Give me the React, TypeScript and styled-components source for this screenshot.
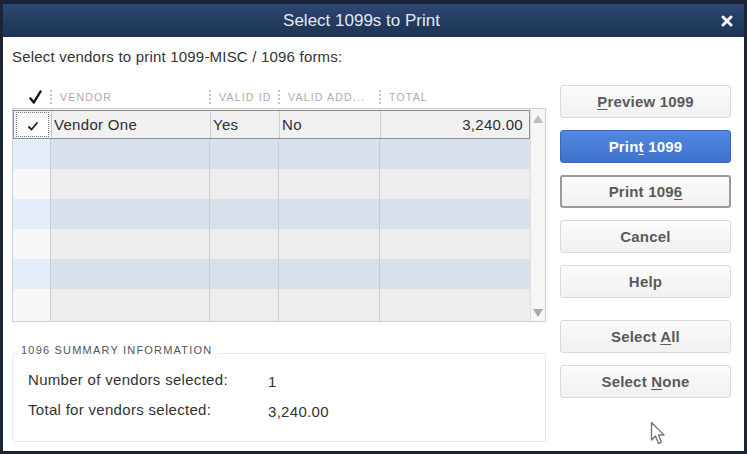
import styled, { createGlobalStyle } from 'styled-components';

const GlobalStyle = createGlobalStyle`
  html, body {
    margin: 0;
    padding: 0;
    background: #1b2536;
  }
  * {
    box-sizing: border-box;
  }
`;

type Vendor = { name: string; validId: string; validAddress: string; total: string };

const vendors: Vendor[] = [
  { name: 'Vendor One', validId: 'Yes', validAddress: 'No', total: '3,240.00' },
];

const EMPTY_ROWS = 6;

const App = () => {
  return (
    <Window>
      <GlobalStyle />
      <TitleBar>
        <Title>Select 1099s to Print</Title>
        <CloseButton aria-label="Close">
          <svg width="12" height="12" viewBox="0 0 12 12">
            <path d="M2 2 L10 10 M10 2 L2 10" stroke="#f2f4f8" strokeWidth="3" strokeLinecap="round" />
          </svg>
        </CloseButton>
      </TitleBar>

      <Body>
        <MainColumn>
          <Intro>Select vendors to print 1099-MISC / 1096 forms:</Intro>

          <HeaderRow>
            <HeaderCell>
              <svg width="13" height="14" viewBox="0 0 13 14">
                <path d="M1.5 8.5 L4.8 12.5 L11.5 1.5" stroke="#111" strokeWidth="2.4" fill="none" strokeLinecap="round" strokeLinejoin="round" />
              </svg>
            </HeaderCell>
            <HeaderCell $divider>Vendor</HeaderCell>
            <HeaderCell $divider>Valid ID</HeaderCell>
            <HeaderCell $divider>Valid Add...</HeaderCell>
            <HeaderCell $divider>Total</HeaderCell>
          </HeaderRow>

          <Table>
            <Rows>
              {vendors.map((v) => (
                <DataRow key={v.name}>
                  <CheckCell>
                    <CheckBox>
                      <svg width="10" height="9" viewBox="0 0 10 9">
                        <path d="M1 5 L3.5 7.5 L9 1" stroke="#222" strokeWidth="1.8" fill="none" strokeLinecap="round" strokeLinejoin="round" />
                      </svg>
                    </CheckBox>
                  </CheckCell>
                  <Cell>{v.name}</Cell>
                  <Cell>{v.validId}</Cell>
                  <Cell>{v.validAddress}</Cell>
                  <Cell $right $last>{v.total}</Cell>
                </DataRow>
              ))}
              {Array.from({ length: EMPTY_ROWS }).map((_, i) => (
                <EmptyRow key={i} $blue={i % 2 === 0}>
                  <FirstCell $blue={i % 2 === 0} />
                  <Cell />
                  <Cell />
                  <Cell />
                  <Cell $last />
                </EmptyRow>
              ))}
            </Rows>
            <Scrollbar>
              <ScrollArrow $up />
              <ScrollArrow />
            </Scrollbar>
          </Table>

          <Summary>
            <SummaryLegend>1096 Summary Information</SummaryLegend>
            <SummaryLine>
              <SummaryLabel>Number of vendors selected:</SummaryLabel>
              <SummaryValue>1</SummaryValue>
            </SummaryLine>
            <SummaryLine>
              <SummaryLabel>Total for vendors selected:</SummaryLabel>
              <SummaryValue>3,240.00</SummaryValue>
            </SummaryLine>
          </Summary>
        </MainColumn>

        <ButtonColumn>
          <Button><span><u>P</u>review 1099</span></Button>
          <Button $variant="primary"><span>Prin<u>t</u> 1099</span></Button>
          <Button $variant="focused"><span>Print 109<u>6</u></span></Button>
          <Button><span>Cancel</span></Button>
          <Button><span>Help</span></Button>
          <Button $gapBefore><span>Select <u>A</u>ll</span></Button>
          <Button><span>Select <u>N</u>one</span></Button>
        </ButtonColumn>

        <Cursor width="18" height="26" viewBox="0 0 18 26">
          <path
            d="M1.5 1.5 L1.5 19 L5.5 15 L8.5 22.5 L11.5 21.2 L8.6 14 L14 14 Z"
            fill="#fff"
            stroke="#777"
            strokeWidth="1.4"
            strokeLinejoin="round"
          />
        </Cursor>
      </Body>
    </Window>
  );
};

const Window = styled.div`
  width: 747px;
  height: 454px;
  display: flex;
  flex-direction: column;
  padding: 4px 3px 3px 3px;
  background: #1b2536;
  font-family: 'Liberation Sans', Arial, sans-serif;
  overflow: hidden;
`;

const TitleBar = styled.div`
  height: 33px;
  flex-shrink: 0;
  display: flex;
  align-items: center;
  justify-content: center;
  padding-right: 24px;
  position: relative;
  background: linear-gradient(#2d4872, #213a5e 60%, #1e3555);
`;

const Title = styled.div`
  color: #e4e9f0;
  font-size: 17px;
`;

const CloseButton = styled.div`
  position: absolute;
  right: 11px;
  top: 11px;
  width: 12px;
  height: 12px;
  display: flex;
`;

const Body = styled.div`
  flex: 1;
  display: flex;
  gap: 14px;
  padding: 12px 13px 0 9px;
  background: #ffffff;
  position: relative;
`;

const MainColumn = styled.div`
  width: 534px;
  display: flex;
  flex-direction: column;
`;

const Intro = styled.div`
  font-size: 15px;
  line-height: 16px;
  color: #333;
  letter-spacing: 0.2px;
`;

const columns = '38px 159px 69px 101px 149px';

const HeaderRow = styled.div`
  display: grid;
  grid-template-columns: ${columns};
  height: 18px;
  margin-top: 23px;
  align-items: center;
`;

const HeaderCell = styled.div<{ $divider?: boolean }>`
  display: flex;
  align-items: center;
  justify-content: ${({ $divider }) => ($divider ? 'flex-start' : 'center')};
  height: 14px;
  padding-left: 8px;
  font-size: 10.5px;
  letter-spacing: 1.2px;
  text-transform: uppercase;
  color: #acacac;
  border-left: ${({ $divider }) => ($divider ? '2px dotted #c4c4c4' : 'none')};
  white-space: nowrap;
  overflow: hidden;
`;

const Table = styled.div`
  margin-top: 2px;
  height: 214px;
  display: flex;
  border: 1px solid #d0d0d0;
  background: #f3f3f3;
`;

const Rows = styled.div`
  flex: 1;
  display: flex;
  flex-direction: column;
`;

const rowColumns = '38px 159px 69px 101px 148px';

const DataRow = styled.div`
  display: grid;
  grid-template-columns: ${rowColumns};
  height: 29px;
  margin-top: 1px;
  border: 1px solid #8e8e8e;
  background: #f1f1f1;
`;

const EmptyRow = styled.div<{ $blue: boolean }>`
  display: grid;
  grid-template-columns: ${rowColumns};
  height: 30px;
  background: ${({ $blue }) => ($blue ? '#d8e0eb' : '#ededed')};
  &:last-child {
    flex: 1;
  }
`;

const Cell = styled.div<{ $right?: boolean; $last?: boolean }>`
  display: flex;
  align-items: center;
  justify-content: ${({ $right }) => ($right ? 'flex-end' : 'flex-start')};
  padding: 0 6px 1px 2px;
  border-right: ${({ $last }) => ($last ? 'none' : '1px solid #cbcbcb')};
  font-size: 15px;
  color: #2f2f2f;
  letter-spacing: 0.3px;
`;

const CheckCell = styled.div`
  display: flex;
  align-items: center;
  justify-content: center;
  padding: 1px 2px;
  border-right: 1px solid #cbcbcb;
`;

const FirstCell = styled.div<{ $blue: boolean }>`
  background: ${({ $blue }) => ($blue ? '#e4edf9' : '#f8f8f9')};
  border-right: 1px solid #cbcbcb;
`;

const CheckBox = styled.div`
  width: 100%;
  height: 100%;
  display: flex;
  align-items: center;
  justify-content: center;
  border: 1px dotted #777;
  background: #fdfdfd;
  padding-top: 3px;
`;

const Scrollbar = styled.div`
  width: 18px;
  display: flex;
  flex-direction: column;
  justify-content: space-between;
  align-items: center;
  padding: 6px 0 4px;
  background: #f6f6f6;
  border-left: 1px solid #dedede;
`;

const ScrollArrow = styled.div<{ $up?: boolean }>`
  width: 0;
  height: 0;
  border-left: 5px solid transparent;
  border-right: 5px solid transparent;
  ${({ $up }) => ($up ? 'border-bottom: 8px solid #bdbdbd;' : 'border-top: 8px solid #a9a9a9;')}
`;

const Summary = styled.fieldset`
  margin: 22px 0 0;
  height: 98px;
  padding: 1px 0 0 15px;
  border: 1px solid #e9e9e9;
  border-radius: 2px;
  display: flex;
  flex-direction: column;
`;

const SummaryLegend = styled.legend`
  padding: 0 6px 7px 1px;
  margin-left: -8px;
  font-size: 11px;
  letter-spacing: 1.2px;
  text-transform: uppercase;
  color: #555;
`;

const SummaryLine = styled.div`
  display: flex;
  align-items: center;
  height: 30px;
  font-size: 15px;
  color: #333;
  letter-spacing: 0.3px;
`;

const SummaryLabel = styled.div`
  width: 240px;
`;

const SummaryValue = styled.div`
  padding-top: 4px;
`;

const ButtonColumn = styled.div`
  width: 171px;
  display: flex;
  flex-direction: column;
  gap: 12px;
  padding-top: 36px;
`;

const Button = styled.div<{ $variant?: 'primary' | 'focused'; $gapBefore?: boolean }>`
  height: 33px;
  display: flex;
  align-items: center;
  justify-content: center;
  border-radius: 3px;
  font-size: 15px;
  font-weight: bold;
  letter-spacing: 0.2px;
  margin-top: ${({ $gapBefore }) => ($gapBefore ? '10px' : '0')};
  color: ${({ $variant }) => ($variant === 'primary' ? '#ffffff' : '#5a5a5a')};
  background: ${({ $variant }) =>
    $variant === 'primary'
      ? 'linear-gradient(#5089e0, #3e72cc)'
      : 'linear-gradient(#fbfbfb, #f1f1f1)'};
  border: ${({ $variant }) =>
    $variant === 'primary'
      ? '1px solid #3a67b8'
      : $variant === 'focused'
      ? '2px solid #9a9a9a'
      : '1px solid #dadada'};
  u {
    text-underline-offset: 2px;
  }
`;

const Cursor = styled.svg`
  position: absolute;
  left: 647px;
  top: 384px;
`;

export default App;
